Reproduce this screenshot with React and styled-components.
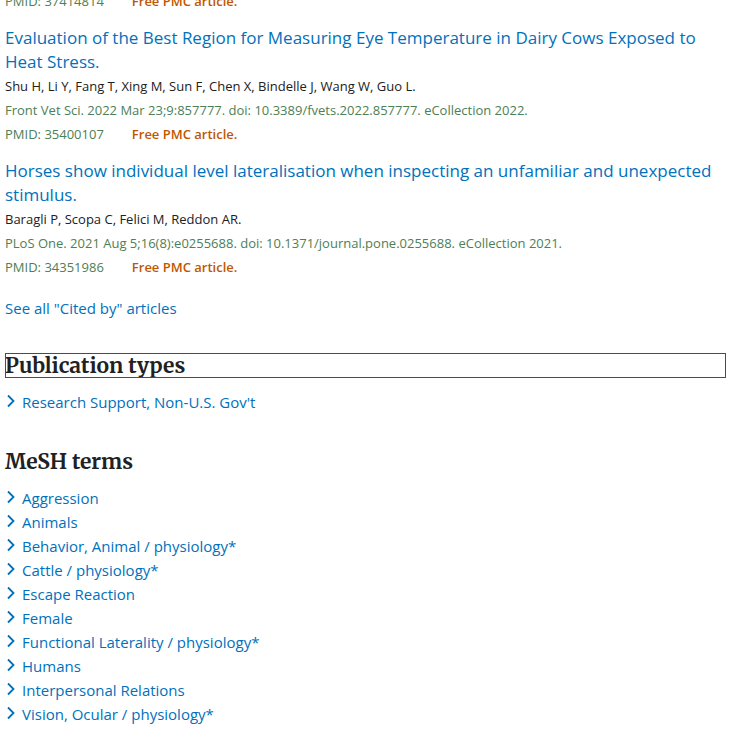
import React from "react";
import styled, { createGlobalStyle } from "styled-components";

const Global = createGlobalStyle`
  * { box-sizing: border-box; }
  html, body { margin: 0; background: #fff; }
  html { overflow: hidden; }
  body {
    color: #212121;
    font-family: "Segoe UI", "Open Sans", "Noto Sans", sans-serif;
    font-size: 15px;
    line-height: 24px;
  }
`;

const Page = styled.main`
  padding: 0 4px 3px 5px;
`;

const Articles = styled.ul`
  list-style: none;
  margin: 0;
  padding: 0;
  display: flex;
  flex-direction: column;
  gap: 13px;
`;

const Article = styled.li`
  display: flex;
  flex-direction: column;
  font-size: 13px;
`;

const Link = styled.a`
  color: #0071bc;
  text-decoration: none;
  &:hover { text-decoration: underline; }
`;

const Title = styled(Link)`
  font-size: 17px;
`;

const Authors = styled.span`
  color: #212121;
`;

const Citation = styled.span`
  color: #4d8055;
`;

const Ids = styled.div`
  display: flex;
  gap: 28px;
  color: #4d8055;
  margin-top: ${(p) => (p.$clipped ? "-11px" : "0")};
`;

const Free = styled.span`
  color: #c05600;
  font-weight: 600;
`;

const SeeAll = styled.p`
  margin: 17px 0 0;
`;

const Section = styled.section`
  margin-top: 33px;
`;

const Heading = styled.h2`
  margin: 0 0 12px;
  outline: ${(p) => (p.$outlined ? "1px solid #f00" : "none")};
  outline-offset: -1px;
  font-family: Merriweather, "Liberation Serif", serif;
  font-size: 21px;
  font-weight: 700;
  line-height: 25px;
`;

const Terms = styled.ul`
  list-style: none;
  margin: 0;
  padding: 0 0 2px;
`;

const Term = styled.li`
  display: flex;
  gap: 6px;
`;

const Chevron = styled.svg`
  flex: none;
  width: 11px;
  height: 22px;
  color: #0071bc;
`;

const articles = [
  {
    title: "Evaluation of the Best Region for Measuring Eye Temperature in Dairy Cows Exposed to Heat Stress.",
    authors: "Shu H, Li Y, Fang T, Xing M, Sun F, Chen X, Bindelle J, Wang W, Guo L.",
    citation: "Front Vet Sci. 2022 Mar 23;9:857777. doi: 10.3389/fvets.2022.857777. eCollection 2022.",
    pmid: "35400107",
  },
  {
    title: "Horses show individual level lateralisation when inspecting an unfamiliar and unexpected stimulus.",
    authors: "Baragli P, Scopa C, Felici M, Reddon AR.",
    citation: "PLoS One. 2021 Aug 5;16(8):e0255688. doi: 10.1371/journal.pone.0255688. eCollection 2021.",
    pmid: "34351986",
  },
];

const meshTerms = [
  "Aggression",
  "Animals",
  "Behavior, Animal / physiology*",
  "Cattle / physiology*",
  "Escape Reaction",
  "Female",
  "Functional Laterality / physiology*",
  "Humans",
  "Interpersonal Relations",
  "Vision, Ocular / physiology*",
];

function Identifiers({ pmid, clipped }) {
  return (
    <Ids $clipped={clipped}>
      <span>PMID: {pmid}</span>
      <Free>Free PMC article.</Free>
    </Ids>
  );
}

function TermList({ items }) {
  return (
    <Terms>
      {items.map((item) => (
        <Term key={item}>
          <Chevron viewBox="0 0 11 22" aria-hidden="true">
            <path d="M3 5.5L8.5 11L3 16.5" fill="none" stroke="currentColor" strokeWidth="1.8" />
          </Chevron>
          <Link href="#">{item}</Link>
        </Term>
      ))}
    </Terms>
  );
}

export default function App() {
  return (
    <>
      <Global />
      <Page>
        <Articles>
          <Article>
            <Identifiers pmid="37414814" clipped />
          </Article>
          {articles.map((a) => (
            <Article key={a.pmid}>
              <Title href="#">{a.title}</Title>
              <Authors>{a.authors}</Authors>
              <Citation>{a.citation}</Citation>
              <Identifiers pmid={a.pmid} />
            </Article>
          ))}
        </Articles>
        <SeeAll>
          <Link href="#">See all "Cited by" articles</Link>
        </SeeAll>
        <Section>
          <Heading $outlined>Publication types</Heading>
          <TermList items={["Research Support, Non-U.S. Gov't"]} />
        </Section>
        <Section>
          <Heading>MeSH terms</Heading>
          <TermList items={meshTerms} />
        </Section>
      </Page>
    </>
  );
}
